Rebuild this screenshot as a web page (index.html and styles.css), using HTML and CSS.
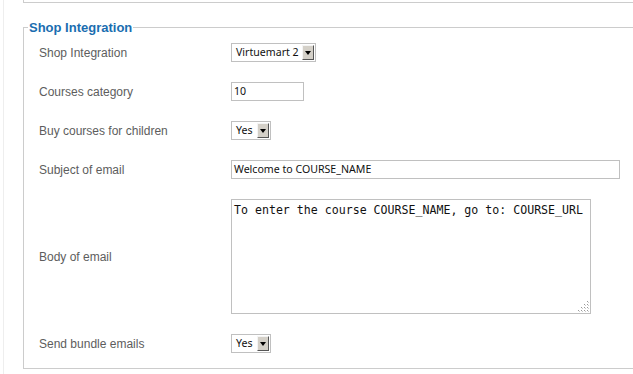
FILE: index.html
```html
<!DOCTYPE html>
<html>
<head>
<meta charset="utf-8">
<link rel="stylesheet" href="styles.css">
</head>
<body>
<div class="page">
  <div class="prev-box"></div>
  <fieldset class="panel">
    <legend class="panel-title">Shop Integration</legend>
    <div class="rows">
      <div class="row">
        <label class="lbl">Shop Integration</label>
        <div class="select sel-wide"><span class="sel-text">Virtuemart 2</span><span class="sel-btn"><span class="tri"></span></span></div>
      </div>
      <div class="row">
        <label class="lbl">Courses category</label>
        <div class="input inp-short">10</div>
      </div>
      <div class="row">
        <label class="lbl">Buy courses for children</label>
        <div class="select sel-yes"><span class="sel-text">Yes</span><span class="sel-btn"><span class="tri"></span></span></div>
      </div>
      <div class="row">
        <label class="lbl">Subject of email</label>
        <div class="input inp-long">Welcome to COURSE_NAME</div>
      </div>
      <div class="row">
        <label class="lbl">Body of email</label>
        <div class="textarea">To enter the course COURSE_NAME, go to: COURSE_URL
          <svg class="grip" width="11" height="11" viewBox="0 0 11 11">
            <rect x="9" y="0" width="1" height="1" fill="#999"/><rect x="10" y="1" width="1" height="1" fill="#ccc"/>
            <rect x="6" y="3" width="1" height="1" fill="#999"/><rect x="7" y="4" width="1" height="1" fill="#ccc"/>
            <rect x="9" y="3" width="1" height="1" fill="#999"/><rect x="10" y="4" width="1" height="1" fill="#ccc"/>
            <rect x="3" y="6" width="1" height="1" fill="#999"/><rect x="4" y="7" width="1" height="1" fill="#ccc"/>
            <rect x="6" y="6" width="1" height="1" fill="#999"/><rect x="7" y="7" width="1" height="1" fill="#ccc"/>
            <rect x="9" y="6" width="1" height="1" fill="#999"/><rect x="10" y="7" width="1" height="1" fill="#ccc"/>
            <rect x="0" y="9" width="1" height="1" fill="#999"/><rect x="1" y="10" width="1" height="1" fill="#ccc"/>
            <rect x="3" y="9" width="1" height="1" fill="#999"/><rect x="4" y="10" width="1" height="1" fill="#ccc"/>
            <rect x="6" y="9" width="1" height="1" fill="#999"/><rect x="7" y="10" width="1" height="1" fill="#ccc"/>
            <rect x="9" y="9" width="1" height="1" fill="#999"/><rect x="10" y="10" width="1" height="1" fill="#ccc"/>
          </svg>
        </div>
      </div>
      <div class="row">
        <label class="lbl">Send bundle emails</label>
        <div class="select sel-yes"><span class="sel-text">Yes</span><span class="sel-btn"><span class="tri"></span></span></div>
      </div>
    </div>
  </fieldset>
</div>
</body>
</html>
```

FILE: styles.css
```css
html, body {
  margin: 0;
  padding: 0;
  background: #fff;
  overflow: hidden;
}
body {
  width: 633px;
  height: 374px;
  font-family: "Liberation Sans", Arial, sans-serif;
}
.page {
  margin-left: 3px;
  border-left: 1px solid #eeeeee;
  padding-left: 19px;
  height: 374px;
  width: 700px;
  box-sizing: border-box;
}
.prev-box {
  height: 2px;
  border: 1px solid #cccccc;
  border-top: none;
  margin-bottom: 17px;
}
.panel {
  margin: 0;
  border: 1px solid #cccccc;
  padding: 0 0 15px 15px;
  min-width: 0;
}
.panel-title {
  margin-left: -11px;
  padding: 0 1px;
  font-weight: bold;
  font-size: 13px;
  line-height: 15px;
  color: #1a6db0;
}
.rows {
  display: flex;
  flex-direction: column;
  gap: 20px;
  padding-top: 8px;
}
.row {
  display: flex;
  align-items: center;
}
.lbl {
  width: 192px;
  flex: none;
  font-size: 12px;
  color: #5d5d5d;
}
.select, .input, .textarea {
  box-sizing: border-box;
  border: 1px solid #c0c0c0;
  background: #fff;
  font-family: "Noto Sans", "DejaVu Sans", sans-serif;
  font-size: 10.6px;
  color: #111;
}
.select {
  display: flex;
  align-items: center;
  height: 19px;
  padding: 0 1px 0 4px;
}
.sel-wide { width: 85px; }
.sel-yes { width: 40px; }
.sel-text {
  flex: 1;
  white-space: nowrap;
  line-height: 15px;
}
.sel-btn {
  box-sizing: border-box;
  width: 12px;
  height: 15px;
  background: #d4d0c8;
  border-top: 1px solid #f4f4f4;
  border-left: 1px solid #f4f4f4;
  border-right: 1px solid #555;
  border-bottom: 1px solid #555;
  display: flex;
  align-items: center;
  justify-content: center;
}
.tri {
  width: 0;
  height: 0;
  border-left: 3px solid transparent;
  border-right: 3px solid transparent;
  border-top: 4px solid #000;
}
.input {
  height: 19px;
  padding: 0 2px;
  line-height: 17px;
}
.inp-short { width: 73px; }
.inp-long { width: 389px; }
.textarea {
  position: relative;
  width: 360px;
  height: 115px;
  padding: 3px 2px;
  font-family: "DejaVu Sans Mono", monospace;
  font-size: 11.6px;
  line-height: 14px;
  white-space: pre;
}
.grip {
  position: absolute;
  right: 1px;
  bottom: 1px;
}
```
